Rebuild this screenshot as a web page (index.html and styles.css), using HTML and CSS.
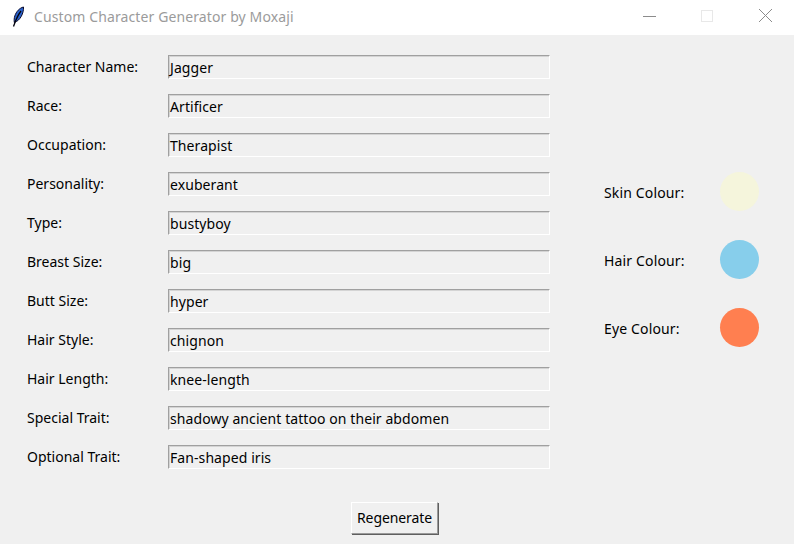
FILE: index.html
```html
<!DOCTYPE html>
<html lang="en">
<head>
<meta charset="utf-8">
<title>Custom Character Generator by Moxaji</title>
<link rel="stylesheet" href="styles.css">
</head>
<body>
<header class="titlebar">
  <svg class="app-icon" width="16" height="22" viewBox="0 0 16 22"><path d="M13.500 1C9.500 2 6.300 5.500 4.800 10c-.7 2.200-.8 4-.5 6.500C7.500 15.500 9.800 13 11.200 10.500c1.700-3 2.500-6.500 2.300-9.500z" fill="#2a62cc" stroke="#0a0a2a" stroke-width="1"/><path d="M11 5C8 9 5.800 13.500 3.500 20.500" fill="none" stroke="#05050f" stroke-width="1.300"/></svg>
  <span class="title">Custom Character Generator by Moxaji</span>
  <div class="controls">
    <svg width="13" height="12" viewBox="0 0 13 12" class="ctl"><path d="M0 6.500H13" stroke="#8c8c8c" fill="none"/></svg>
    <svg width="14" height="14" viewBox="0 0 14 14" class="ctl"><rect x="1.500" y="1.500" width="11" height="11" fill="none" stroke="#e8e8e8"/></svg>
    <svg width="15" height="15" viewBox="0 0 15 15" class="ctl"><path d="M1 1L14 14M14 1L1 14" stroke="#8c8c8c" fill="none"/></svg>
  </div>
</header>
<main class="window">
  <div class="content">
    <form class="fields">
      <label class="row"><span class="name">Character Name:</span><span class="entry">Jagger</span></label>
      <label class="row"><span class="name">Race:</span><span class="entry">Artificer</span></label>
      <label class="row"><span class="name">Occupation:</span><span class="entry">Therapist</span></label>
      <label class="row"><span class="name">Personality:</span><span class="entry">exuberant</span></label>
      <label class="row"><span class="name">Type:</span><span class="entry">bustyboy</span></label>
      <label class="row"><span class="name">Breast Size:</span><span class="entry">big</span></label>
      <label class="row"><span class="name">Butt Size:</span><span class="entry">hyper</span></label>
      <label class="row"><span class="name">Hair Style:</span><span class="entry">chignon</span></label>
      <label class="row"><span class="name">Hair Length:</span><span class="entry">knee-length</span></label>
      <label class="row"><span class="name">Special Trait:</span><span class="entry">shadowy ancient tattoo on their abdomen</span></label>
      <label class="row"><span class="name">Optional Trait:</span><span class="entry">Fan-shaped iris</span></label>
    </form>
    <aside class="colours">
      <div class="colour"><span class="name">Skin Colour:</span><span class="dot skin"></span></div>
      <div class="colour"><span class="name">Hair Colour:</span><span class="dot hair"></span></div>
      <div class="colour"><span class="name">Eye Colour:</span><span class="dot eye"></span></div>
    </aside>
  </div>
  <div class="actions"><button class="btn" type="button">Regenerate</button></div>
</main>
</body>
</html>
```

FILE: styles.css
```css
* { box-sizing: border-box; }
html, body { margin: 0; height: 100%; }
body {
  width: 794px;
  height: 544px;
  overflow: hidden;
  background: #f0f0f0;
  color: #000;
  font-family: "Noto Sans", sans-serif;
  font-size: 14px;
  line-height: 20px;
  display: flex;
  flex-direction: column;
}
.titlebar {
  height: 35px;
  flex: none;
  background: #fff;
  display: flex;
  align-items: center;
  padding-left: 10px;
}
.app-icon { flex: none; margin-top: -2px; }
.title { margin-left: 8px; color: #9b9b9b; margin-top: -2px; letter-spacing: 0.11px; }
.controls {
  margin-left: auto;
  display: flex;
  align-items: center;
}
.ctl { display: block; flex: none; margin-top: -4px; }
.ctl:nth-child(1) { margin-right: 44px; }
.ctl:nth-child(2) { margin-right: 44px; }
.ctl:nth-child(3) { margin-right: 21px; }
.window { flex: 1; display: flex; flex-direction: column; }
.content { display: flex; padding: 20px 0 0 27px; }
.fields { width: 523px; display: flex; flex-direction: column; gap: 15px; margin: 0; }
.row { display: flex; align-items: center; height: 24px; }
.row .name { width: 141px; flex: none; }
.entry {
  width: 382px;
  height: 24px;
  flex: none;
  padding: 2px 0 0 1px;
  border: 1px solid;
  border-color: #a0a0a0 #fff #fff #a0a0a0;
  box-shadow: inset 1px 1px 0 #d4d4d4;
  white-space: nowrap;
  letter-spacing: 0.08px;
}
.colours {
  margin: 117px 0 0 54px;
  display: flex;
  flex-direction: column;
  gap: 29px;
}
.colour { display: flex; align-items: center; height: 39px; }
.colour .name { width: 116px; flex: none; padding-top: 2px; letter-spacing: 0.15px; }
.dot { width: 39px; height: 39px; border-radius: 50%; flex: none; }
.skin { background: #f5f5dc; }
.hair { background: #87ceeb; }
.eye { background: #ff7f50; }
.actions { display: flex; justify-content: center; padding-top: 33px; padding-right: 5px; }
.btn {
  width: 87px;
  height: 32px;
  padding: 0;
  background: #f0f0f0;
  color: #000;
  font: inherit;
  letter-spacing: -0.1px;
  border: 1px solid;
  border-color: #fff #9a9a9a #9a9a9a #fff;
  box-shadow: 1px 1px 0 #5f5f5f;
}
```
